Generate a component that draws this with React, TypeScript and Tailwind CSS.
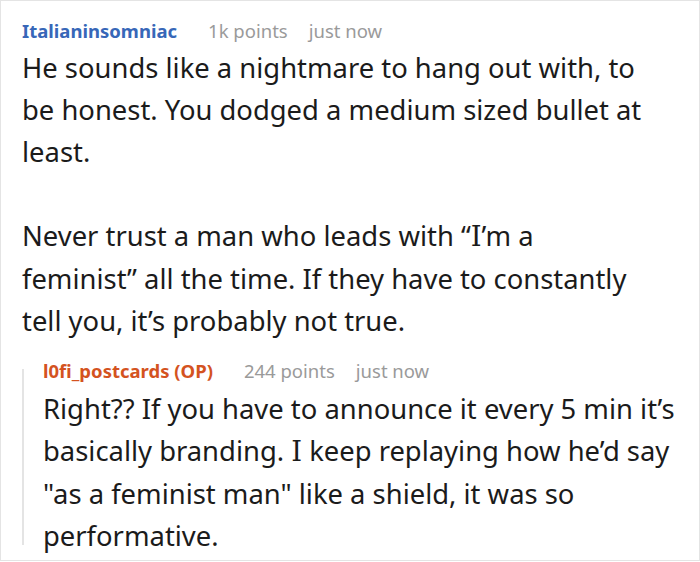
import React from 'react';

interface CommentMeta {
  author: string;
  points: string;
  time: string;
}

const font = { fontFamily: '"Noto Sans", "Open Sans", sans-serif' };

// standalone capital I is drawn with serifs in the reference
const SerifI = () => <span className="[font-family:'DejaVu_Serif',serif]">I</span>;

const CommentHeader = ({ author, points, time, op }: CommentMeta & { op?: boolean }) => (
  <div className="flex items-center h-[20px] text-[18.5px] leading-[20px] whitespace-nowrap">
    <span className={`font-bold ${op ? 'text-[#d4531f]' : 'text-[#3767b8]'}`}>{author}</span>
    <span className="ml-[31px] text-[#9a9a9a]">{points}</span>
    <span className="ml-[21px] text-[#9a9a9a]">{time}</span>
  </div>
);

const App = () => {
  return (
    <div className="w-[700px] h-[561px] bg-white border border-[#e4e4e4] overflow-hidden text-[#1b1b1b]" style={font}>
      {/* Parent comment */}
      <div className="pl-[21px] pt-[20px]">
        <CommentHeader author="Italianinsomniac" points="1k points" time="just now" />
        <div className="mt-[6px] w-[632px] text-[27.4px] leading-[42px]">
          <p>He sounds like a nightmare to hang out with, to be honest. You dodged a medium sized bullet at least.</p>
          <p className="mt-[42px]">
            Never trust a man who leads with “<SerifI />’m a feminist” all the time. If they have to constantly tell you, it’s probably not true.
          </p>
        </div>
      </div>

      {/* Reply */}
      <div className="flex ml-[21px] mt-[19px]">
        <div className="w-[2px] bg-[#e4e4e4] mt-[8px] mb-[12px]" />
        <div className="pl-[19px]">
          <CommentHeader author="l0fi_postcards (OP)" points="244 points" time="just now" op />
          <div className="mt-[7px] w-[656px] text-[27.4px] leading-[42px]">
            <p>
              Right?? If you have to announce it every 5 min it’s basically branding. <SerifI /> keep replaying how he’d say "as a feminist man" like a shield, it was so performative.
            </p>
          </div>
        </div>
      </div>
    </div>
  );
};

export default App;
